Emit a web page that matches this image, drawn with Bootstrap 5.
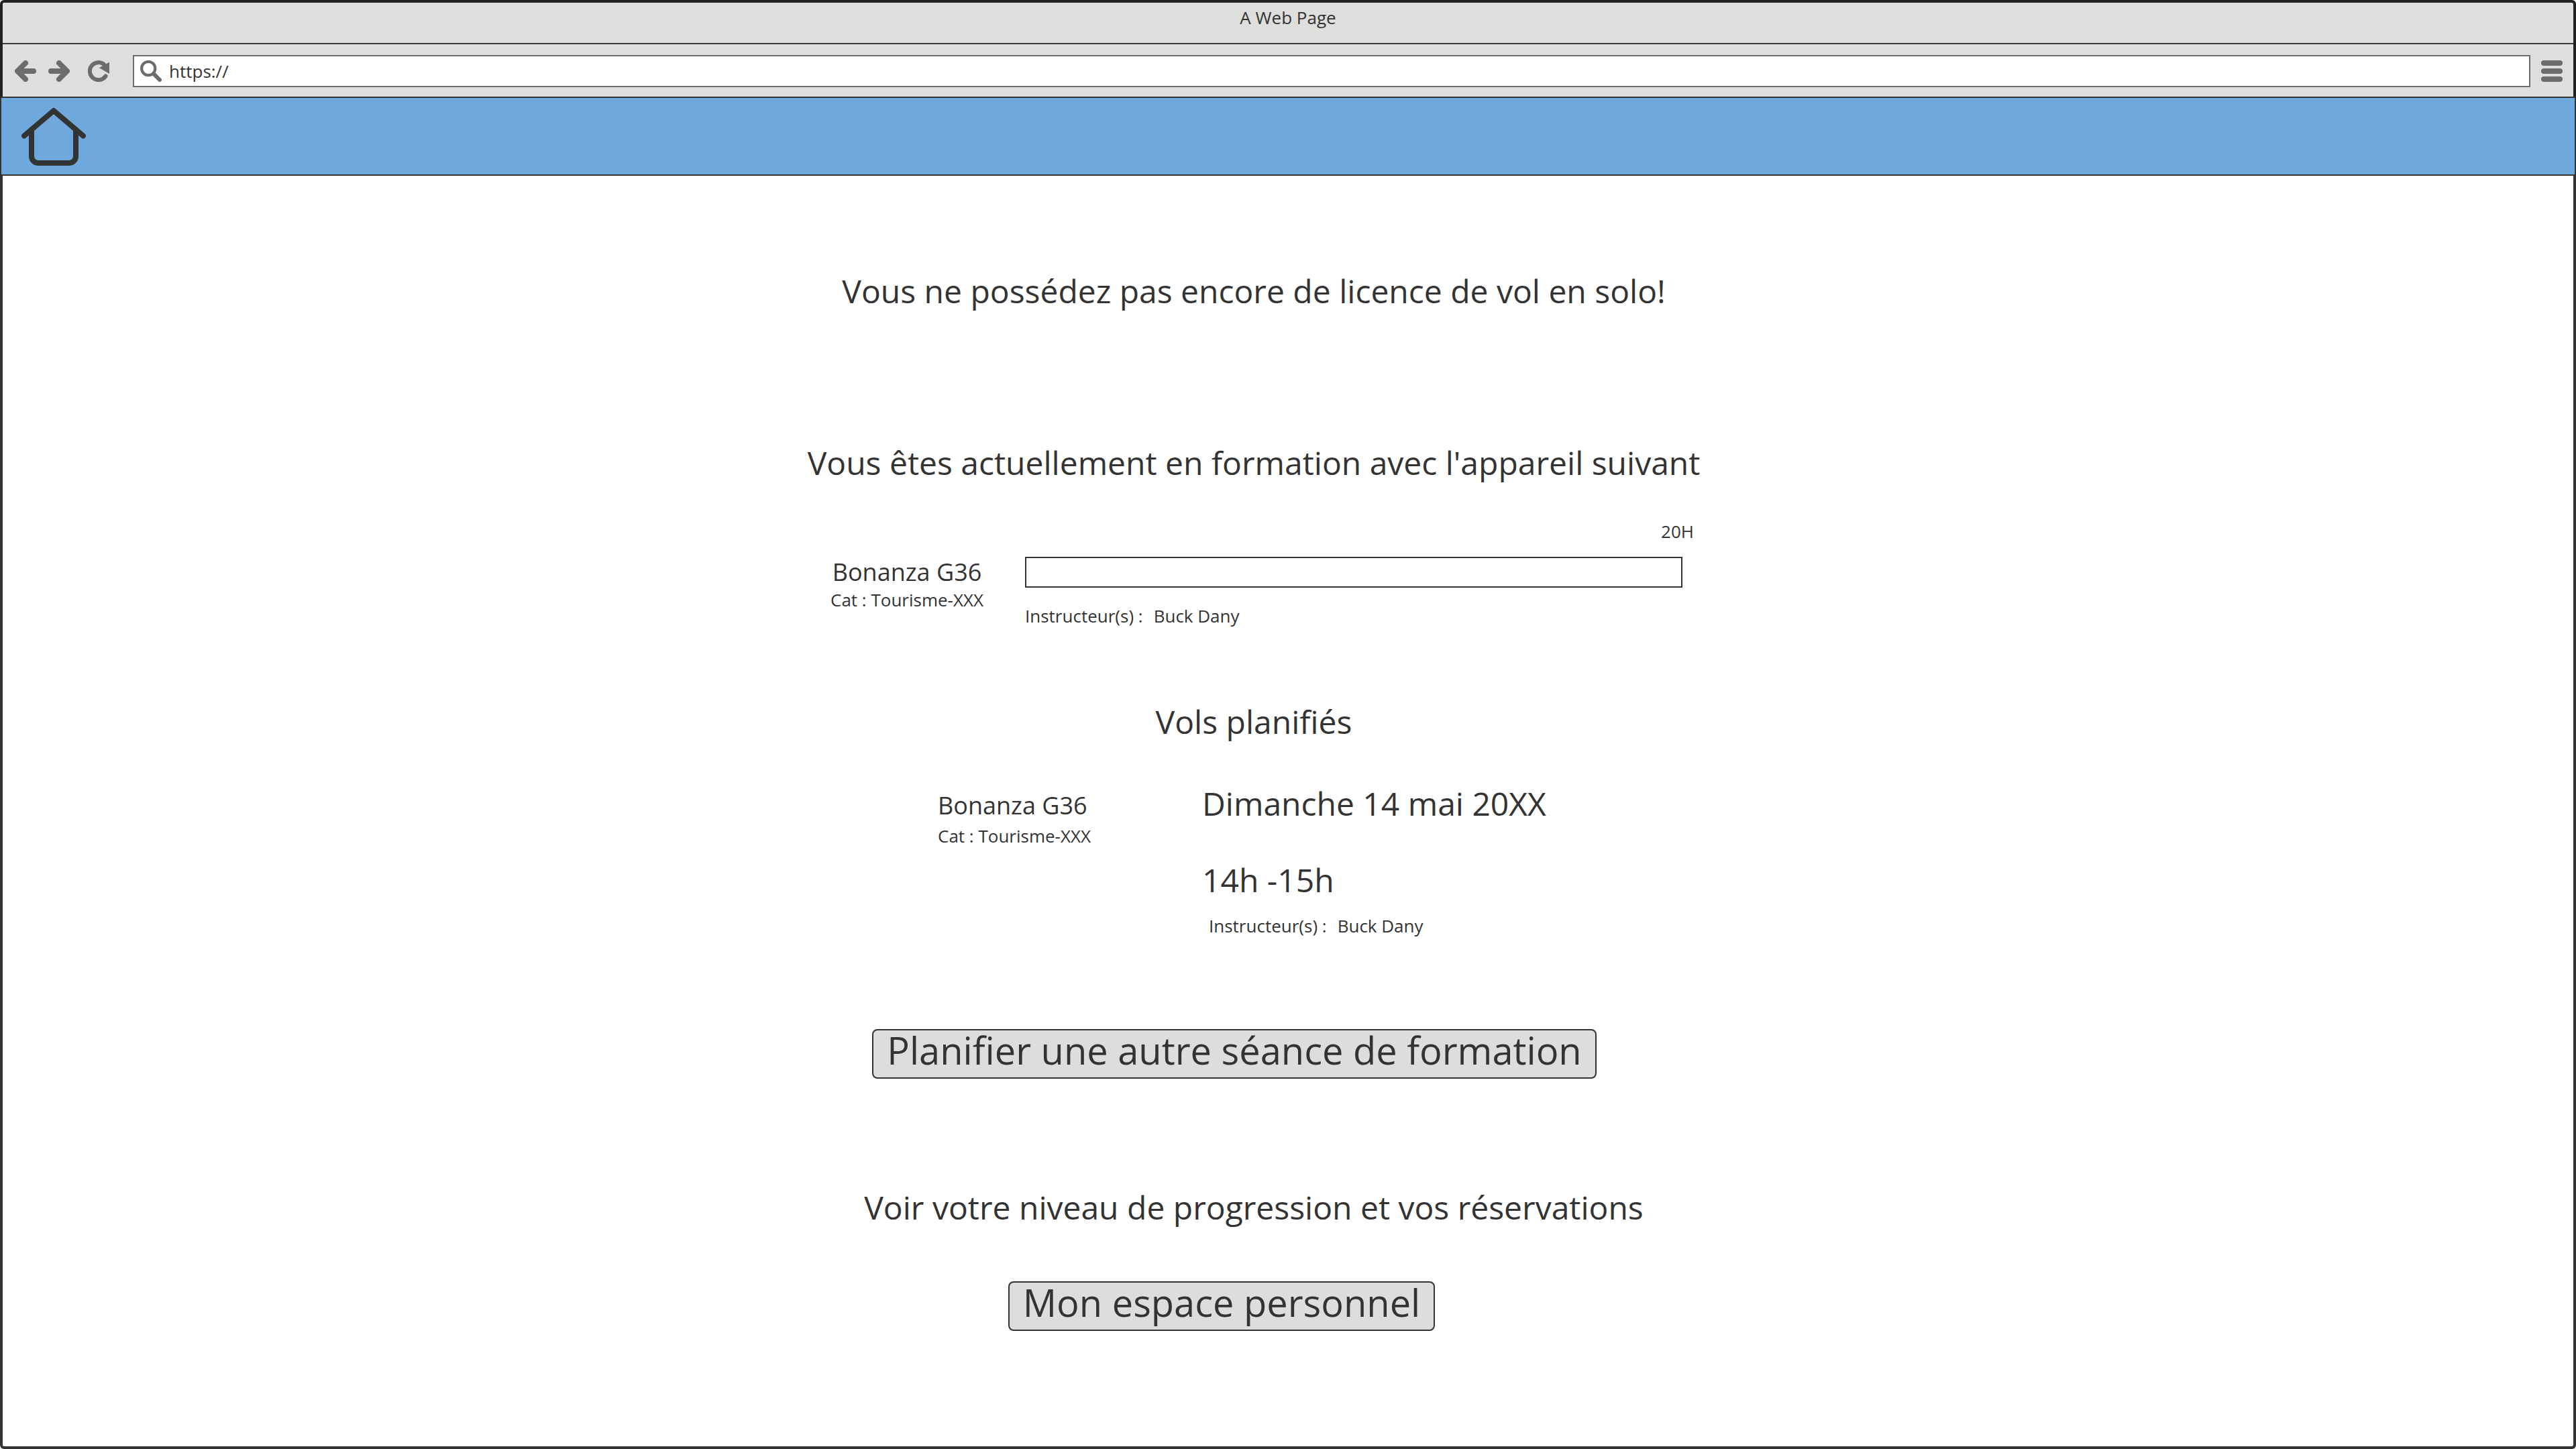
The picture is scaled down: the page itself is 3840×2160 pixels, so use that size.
<!DOCTYPE html>
<html lang="fr">
<head>
<meta charset="utf-8">
<meta name="viewport" content="width=device-width, initial-scale=1">
<title>A Web Page</title>
<link href="https://cdn.jsdelivr.net/npm/bootstrap@5.3.0/dist/css/bootstrap.min.css" rel="stylesheet">
<style>
  :root { --ink: #333333; --chrome: #dededc; --tool: #6c6c6c; }
  body { font-family: "Open Sans", "Noto Sans", sans-serif; font-size: 26px; line-height: 36px; color: var(--ink); background: #fff; }
  svg { display: block; }

  /* Window chrome */
  .window-head { background: var(--chrome); border: 4px solid #231f20; border-bottom: 0; border-radius: 6px 6px 0 0; }
  .window-title { height: 62px; padding-top: 4px; border-bottom: 2px solid #3c3c3c; }
  .toolbar { padding: 16px 16px 14px 18px; color: var(--tool); }
  .tool-btn { padding: 0; border: 0; background: none; color: inherit; }
  .tool-arrows { gap: 18px; margin-right: 27px; }
  .address { height: 48px; margin: 0 16px 0 35px; padding-left: 9px; gap: 11px; background: #fff; border: 2px solid var(--tool); }
  .address input { height: 36px; padding: 0; border: 0; outline: 0; background: none; color: var(--ink); font-size: 26px; line-height: 36px; }

  /* Site bar */
  .site-bar { padding: 14px 30px 12px; background: #6fa8dc; border: 2px solid var(--ink); }
  .site-bar a { color: var(--ink); }

  /* Page */
  .page-body { padding: 140px 102px 40px 0; border: 4px solid var(--ink); border-top: 0; border-radius: 0 0 6px 6px; }
  .content { width: 100%; max-width: 1336px; }
  .headline { margin: 0; font-size: 48px; line-height: 64px; font-weight: 400; white-space: nowrap; }
  .plane { margin: 0; font-size: 36px; line-height: 46px; font-weight: 400; }
  .training { display: grid; grid-template-columns: 290px 1fr; padding: 0 12px 0 37px; margin-top: 52px; }
  .training-plane { padding-top: 56px; justify-self: start; }
  .hours { margin: 20px 17px 24px 0; height: 46px; border: 2px solid var(--ink); border-radius: 0; background: #fff; }
  .teacher { margin-left: 16px; }
  .flight { display: grid; grid-template-columns: 394px 1fr; padding-left: 197px; margin-top: 58px; }
  .flight-plane { padding-top: 12px; }
  .flight-teacher { margin-top: 18px; padding-left: 10px; }
  .action { padding: 0 20px 12px; font-size: 56px; line-height: 58px; color: var(--ink); background: #dddddd; border: 2px solid var(--ink); border-radius: 8px; white-space: nowrap; }
  .action:hover { color: var(--ink); background: #d0d0d0; border-color: var(--ink); }
  .gap-status { margin-top: 192px; }
  .gap-flights { margin-top: 108px; }
  .gap-time { margin-top: 50px; }
  .plan-row { margin-top: 136px; padding-right: 58px; }
  .gap-progress { margin-top: 160px; }
  .space-row { margin-top: 78px; padding-right: 96px; }
</style>
<script src="https://cdn.jsdelivr.net/npm/bootstrap@5.3.0/dist/js/bootstrap.bundle.min.js" defer></script>
</head>
<body>
<div class="d-flex flex-column min-vh-100">

  <header class="window-head">
    <div class="window-title text-center">A Web Page</div>
    <div class="toolbar d-flex align-items-center">
      <div class="tool-arrows d-flex">
        <button type="button" class="tool-btn" aria-label="Page précédente">
          <svg width="32" height="32" viewBox="0 0 32 32" fill="none" stroke="currentColor" stroke-width="8" stroke-linecap="round" stroke-linejoin="round"><path d="M16 4 4 16 16 28M5 16H28"/></svg>
        </button>
        <button type="button" class="tool-btn" aria-label="Page suivante">
          <svg width="32" height="32" viewBox="0 0 32 32" fill="none" stroke="currentColor" stroke-width="8" stroke-linecap="round" stroke-linejoin="round"><path d="M16 4 28 16 16 28M27 16H4"/></svg>
        </button>
      </div>
      <button type="button" class="tool-btn" aria-label="Actualiser">
        <svg width="32" height="32" viewBox="0 0 32 32"><path d="M24 6A13 13 0 1 0 26.5 23.5" fill="none" stroke="currentColor" stroke-width="6" stroke-linecap="round"/><path d="M32 2.7V20L16.7 11Z" fill="currentColor"/></svg>
      </button>
      <div class="address d-flex align-items-center flex-grow-1">
        <label for="url" aria-label="Adresse">
          <svg width="32" height="32" viewBox="0 0 32 32" fill="none" stroke="currentColor" stroke-linecap="round"><circle cx="12.2" cy="12" r="10.1" stroke-width="4.2"/><path d="M20.5 20.5 29 29" stroke-width="6"/></svg>
        </label>
        <input id="url" class="flex-grow-1" type="text" value="https://">
      </div>
      <button type="button" class="tool-btn" aria-label="Menu">
        <svg width="32" height="32" viewBox="0 0 32 32" stroke="currentColor" stroke-width="8" stroke-linecap="round"><path d="M4 4H28M4 16H28M4 28H28"/></svg>
      </button>
    </div>
  </header>

  <nav class="site-bar d-flex">
    <a href="#" aria-label="Accueil">
      <svg width="96" height="88" viewBox="0 0 96 88" fill="none" stroke="currentColor" stroke-width="8" stroke-linecap="round" stroke-linejoin="round"><path d="M4 42.5 48 5 92 42.5"/><path stroke-linecap="butt" d="M15 34V73A10 10 0 0 0 25 83H71A10 10 0 0 0 81 73V34"/></svg>
    </a>
  </nav>

  <main class="page-body flex-grow-1">
    <div class="content mx-auto">
      <h1 class="headline text-center">Vous ne possédez pas encore de licence de vol en solo!</h1>

      <h2 class="headline gap-status text-center">Vous êtes actuellement en formation avec l'appareil suivant</h2>
      <section class="training">
        <div class="training-plane text-center">
          <h3 class="plane">Bonanza G36</h3>
          <div>Cat : Tourisme-XXX</div>
        </div>
        <div>
          <div class="text-end">20H</div>
          <div class="progress hours" role="progressbar" aria-label="Heures de formation" aria-valuenow="0" aria-valuemin="0" aria-valuemax="20">
            <div class="progress-bar" style="width: 0%"></div>
          </div>
          <div class="d-flex"><span>Instructeur(s) :</span><span class="teacher">Buck Dany</span></div>
        </div>
      </section>

      <h2 class="headline gap-flights text-center">Vols planifiés</h2>
      <section class="flight">
        <div class="flight-plane">
          <h3 class="plane mb-1">Bonanza G36</h3>
          <div>Cat : Tourisme-XXX</div>
        </div>
        <div>
          <p class="headline">Dimanche 14 mai 20XX</p>
          <p class="headline gap-time">14h -15h</p>
          <div class="flight-teacher d-flex"><span>Instructeur(s) :</span><span class="teacher">Buck Dany</span></div>
        </div>
      </section>

      <div class="plan-row d-flex justify-content-center">
        <button type="button" class="btn action">Planifier une autre séance de formation</button>
      </div>

      <h2 class="headline gap-progress text-center">Voir votre niveau de progression et vos réservations</h2>
      <div class="space-row d-flex justify-content-center">
        <button type="button" class="btn action">Mon espace personnel</button>
      </div>
    </div>
  </main>
</div>
</body>
</html>
